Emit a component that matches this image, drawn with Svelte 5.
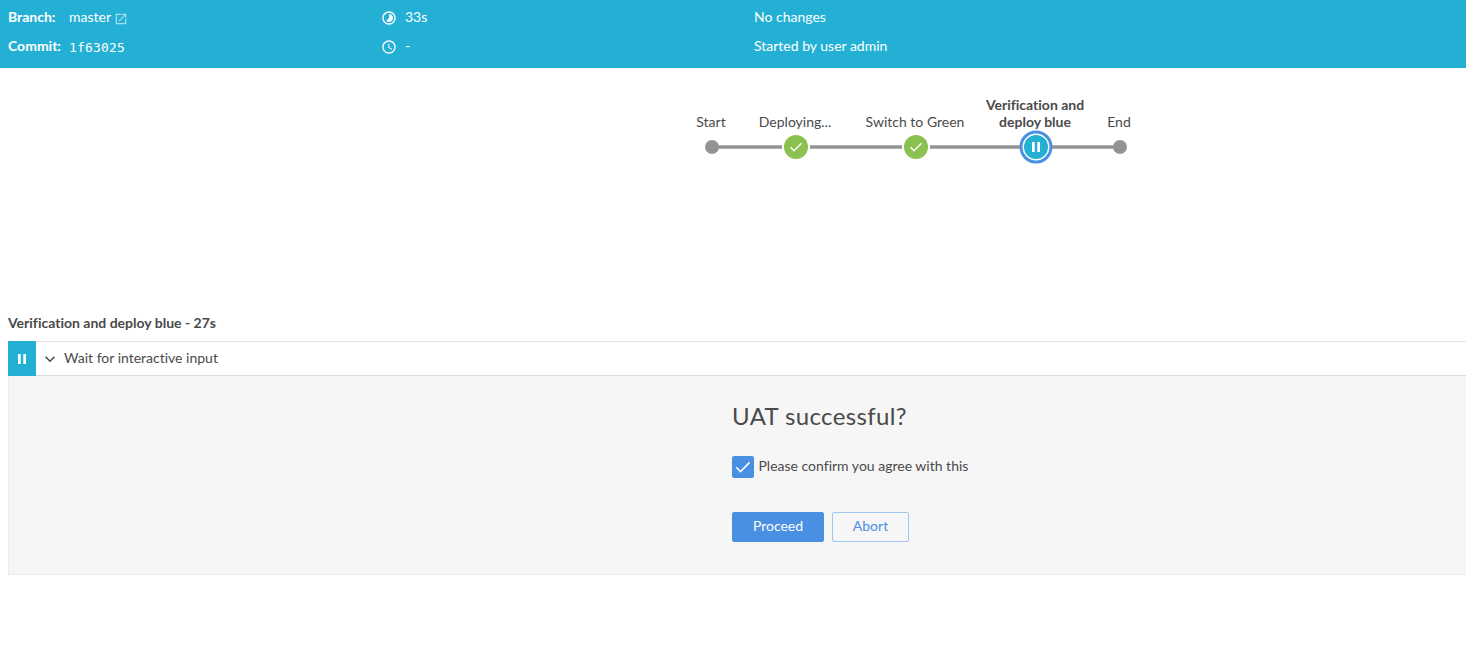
<script>
  const stages = [
    { x: 116, label: 'Deploying...' },
    { x: 236, label: 'Switch to Green' }
  ];
  let confirmed = $state(true);
</script>

<header>
  <dl class="revision">
    <dt>Branch:</dt>
    <dd>
      master
      <svg class="external" width="14" height="14" viewBox="0 0 24 24" fill="currentColor">
        <path d="M19 19H5V5h7V3H3v18h18v-9h-2v7zM14 3v2h3.59l-9.83 9.83 1.41 1.41L19 6.41V10h2V3h-7z" />
      </svg>
    </dd>
    <dt>Commit:</dt>
    <dd class="hash">1f63025</dd>
  </dl>
  <div class="times">
    <div>
      <svg width="16" height="16" viewBox="0 0 24 24" fill="currentColor">
        <path d="M16.24 7.76C15.07 6.59 13.54 6 12 6v6l-4.24 4.24c2.34 2.34 6.14 2.34 8.49 0 2.34-2.34 2.34-6.14-.01-8.48zM12 2C6.48 2 2 6.48 2 12s4.48 10 10 10 10-4.48 10-10S17.52 2 12 2zm0 18c-4.42 0-8-3.58-8-8s3.58-8 8-8 8 3.58 8 8-3.58 8-8 8z" />
      </svg>
      <span>33s</span>
    </div>
    <div>
      <svg width="16" height="16" viewBox="0 0 24 24" fill="currentColor">
        <path d="M11.99 2C6.47 2 2 6.48 2 12s4.47 10 9.99 10C17.52 22 22 17.52 22 12S17.52 2 11.99 2zM12 20c-4.42 0-8-3.58-8-8s3.58-8 8-8 8 3.58 8 8-3.58 8-8 8zm.5-13H11v6l5.25 3.15.75-1.23-4.5-2.67z" />
      </svg>
      <span>-</span>
    </div>
  </div>
  <div class="causes">
    <div>No changes</div>
    <div>Started by user admin</div>
  </div>
</header>

<main>
  <svg class="pipeline" width="470" height="100" viewBox="0 0 470 100">
    <g stroke="#949393" stroke-width="3.5">
      <path d="M32 67H102M130 67H222M250 67H340M372 67H440" />
    </g>
    <g fill="#949393">
      <circle cx="32" cy="67" r="7" />
      <circle cx="440" cy="67" r="7" />
    </g>
    {#each stages as stage}
      <circle cx={stage.x} cy="67" r="12" fill="#8cc04f" />
      <path d="M{stage.x - 5.4} 67.2l3.5 3.5 7.4-7.4" fill="none" stroke="#fff" stroke-width="1.4" />
      <text x={stage.x - 1} y="47">{stage.label}</text>
    {/each}
    <text x="31" y="47">Start</text>
    <text x="439" y="47">End</text>
    <text class="current" x="355" y="30">Verification and</text>
    <text class="current" x="355" y="47">deploy blue</text>
    <circle cx="356" cy="67" r="15" fill="#fff" stroke="#4a90e2" stroke-width="3" />
    <circle cx="356" cy="67" r="12" fill="#24b0d5" />
    <path d="M352 62h2.7v10h-2.7zM357.3 62h2.7v10h-2.7z" fill="#fff" />
  </svg>

  <section class="steps">
    <h2>Verification and deploy blue - 27s</h2>
    <div class="step">
      <span class="status">
        <svg width="28" height="35" viewBox="0 0 28 35"><path d="M10 13h2.7v10H10zM15.3 13H18v10h-2.7z" fill="#fff" /></svg>
      </span>
      <svg class="chevron" width="16" height="16" viewBox="0 0 16 16"><path d="M3.6 5.8L8 10.2l4.4-4.4" fill="none" stroke="#4a4a4a" stroke-width="1.6" /></svg>
      <span class="name">Wait for interactive input</span>
    </div>
    <div class="prompt">
      <form onsubmit={(e) => e.preventDefault()}>
        <h1>UAT successful?</h1>
        <label>
          <input type="checkbox" bind:checked={confirmed} />
          <span class="box">
            {#if confirmed}
              <svg width="22" height="22" viewBox="0 0 22 22"><path d="M4.3 11.3l4.2 4.2 9.1-9.1" fill="none" stroke="#fff" stroke-width="1.6" /></svg>
            {/if}
          </span>
          <span>Please confirm you agree with this</span>
        </label>
        <div class="actions">
          <button class="proceed">Proceed</button>
          <button class="abort" type="button">Abort</button>
        </div>
      </form>
    </div>
  </section>
</main>

<style>
  :global(body) {
    background: #fff;
    overflow: hidden;
  }
  :global(#app) {
    font: 14px/20px Lato, sans-serif;
    font-variant-ligatures: none;
    color: #4a4a4a;
  }
  svg {
    display: block;
    flex: none;
  }
  header {
    box-sizing: border-box;
    height: 68px;
    padding: 7px 8px 0;
    display: grid;
    grid-template-columns: 373px 373px 1fr;
    background: #24b0d5;
    color: #fff;
  }
  .revision {
    margin: 0;
    display: grid;
    grid-template-columns: 61px 1fr;
    grid-auto-rows: 20px;
    row-gap: 9px;
    align-content: start;
  }
  dt {
    font-weight: 700;
  }
  dd {
    margin: 0;
    display: flex;
    gap: 3px;
  }
  .external {
    margin-top: 5px;
    opacity: 0.6;
  }
  .hash {
    font: 13px/24px "DejaVu Sans Mono", monospace;
    letter-spacing: 0.17px;
  }
  .times,
  .causes {
    display: flex;
    flex-direction: column;
    gap: 9px;
  }
  .times div {
    display: flex;
    gap: 8px;
  }
  .times svg {
    margin-top: 3px;
  }
  .pipeline {
    margin: 12px 0 0 680px;
  }
  .pipeline text {
    font-size: 14px;
    text-anchor: middle;
    fill: #4a4a4a;
  }
  .pipeline .current {
    font-weight: 700;
  }
  .steps {
    padding: 133px 0 0 8px;
  }
  h2 {
    margin: 0 0 8px;
    font-size: 14px;
    line-height: 20px;
    font-weight: 700;
  }
  .step {
    height: 35px;
    box-sizing: border-box;
    border-top: 1px solid #e2e2e2;
    border-bottom: 1px solid #dcdcdc;
    display: flex;
    align-items: center;
  }
  .status {
    margin: -1px 0;
    background: #24b0d5;
  }
  .chevron {
    margin: 1px 6px 0;
  }
  .name {
    padding-bottom: 2px;
  }
  .prompt {
    box-sizing: border-box;
    height: 199px;
    padding: 24px 0 0 723px;
    background: #f6f6f6;
    border-left: 1px solid #ebebeb;
    border-bottom: 1px solid #ebebeb;
  }
  h1 {
    margin: 0;
    font-size: 24px;
    line-height: 32px;
    font-weight: 400;
    letter-spacing: 0.37px;
  }
  label {
    margin-top: 24px;
    display: flex;
    gap: 4.5px;
    height: 22px;
  }
  input {
    appearance: none;
    width: 0;
    margin: 0 -4.5px 0 0;
  }
  .box {
    width: 22px;
    height: 22px;
    border-radius: 2px;
    background: #4a90e2;
  }
  .actions {
    display: flex;
    gap: 8px;
    margin-top: 34px;
  }
  button {
    box-sizing: border-box;
    height: 30px;
    width: 92px;
    padding: 0 0 2px;
    border: 1px solid #4a90e2;
    border-radius: 2px;
    background: #4a90e2;
    color: #fff;
    font: inherit;
  }
  .abort {
    width: 77px;
    border-color: #a0c5f0;
    background: transparent;
    color: #4a90e2;
  }
</style>
